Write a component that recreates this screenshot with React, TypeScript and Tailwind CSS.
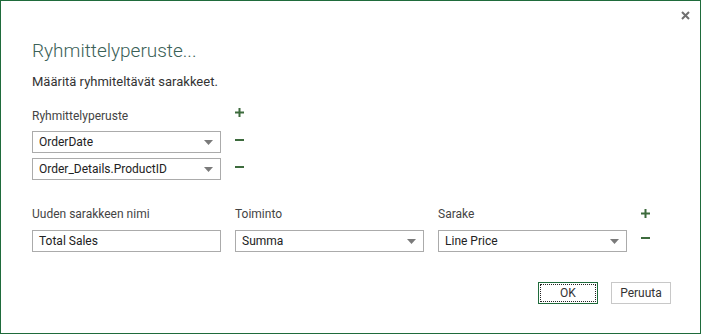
import React from "react";

const font = { fontFamily: 'Roboto, "Segoe UI", "Noto Sans", sans-serif' };

function Arrow() {
  return (
    <svg width="9" height="5" viewBox="0 0 9 5" className="shrink-0">
      <path d="M0 0 H9 L4.5 5 Z" fill="#7a7a7a" />
    </svg>
  );
}

function Plus() {
  return (
    <svg width="9" height="9" viewBox="0 0 9 9">
      <rect x="3.5" y="0" width="2" height="9" fill="#3d6b3d" />
      <rect x="0" y="3.5" width="9" height="2" fill="#3d6b3d" />
    </svg>
  );
}

function Minus() {
  return (
    <svg width="9" height="2" viewBox="0 0 9 2">
      <rect x="0" y="0" width="9" height="2" fill="#3d6b3d" />
    </svg>
  );
}

function Select({ value, w }: { value: string; w: string }) {
  return (
    <div className={`${w} h-[22px] border border-[#ababab] bg-white flex items-center justify-between pl-[6px] pr-[7px] text-[12px] text-[#222]`}>
      <span>{value}</span>
      <Arrow />
    </div>
  );
}

export default function App() {
  return (
    <div className="w-[702px] h-[335px] bg-white" style={font}>
      <div className="w-[701px] h-[334px] border border-[#1f6b3b] relative flex flex-col pl-[31px]">
        <div className="absolute right-[10px] top-[10px] w-[9px] h-[9px]">
          <svg width="9" height="9" viewBox="0 0 9 9">
            <path d="M1 1 L8 8 M8 1 L1 8" stroke="#707070" strokeWidth="2" />
          </svg>
        </div>
        <div className="mt-[37px] text-[19px] font-light text-[#3b6157] leading-[26px]">
          Ryhmittelyperuste...
        </div>
        <div className="mt-[9px] text-[13px] text-[#333] leading-[18px]">
          Määritä ryhmiteltävät sarakkeet.
        </div>
        <div className="mt-[17px] flex items-center h-[16px]">
          <div className="w-[203px] text-[12px] text-[#444]">Ryhmittelyperuste</div>
          <div className="mb-[7px] flex">
            <Plus />
          </div>
        </div>
        <div className="mt-[7px] flex flex-col gap-[5px]">
          <div className="flex items-center gap-[14px]">
            <Select value="OrderDate" w="w-[189px]" />
            <div className="mb-[4px] flex">
              <Minus />
            </div>
          </div>
          <div className="flex items-center gap-[14px]">
            <Select value="Order_Details.ProductID" w="w-[189px]" />
            <div className="mb-[4px] flex">
              <Minus />
            </div>
          </div>
        </div>
        <div className="mt-[26px] flex items-start">
          <div className="flex flex-col gap-[8px] w-[203px]">
            <div className="text-[12px] text-[#444] h-[16px] leading-[16px]">Uuden sarakkeen nimi</div>
            <div className="w-[189px] h-[22px] border border-[#ababab] flex items-center pl-[6px] text-[12px] text-[#222]">Total Sales</div>
          </div>
          <div className="flex flex-col gap-[8px] w-[203px]">
            <div className="text-[12px] text-[#444] h-[16px] leading-[16px]">Toiminto</div>
            <Select value="Summa" w="w-[189px]" />
          </div>
          <div className="flex flex-col gap-[8px] w-[203px]">
            <div className="text-[12px] text-[#444] h-[16px] leading-[16px]">Sarake</div>
            <Select value="Line Price" w="w-[189px]" />
          </div>
          <div className="flex flex-col items-start pt-[3px] gap-[19px]">
            <Plus />
            <Minus />
          </div>
        </div>
        <div className="mt-[30px] flex justify-end pr-[29px] gap-[13px]">
          <div className="w-[60px] h-[22px] border border-[#1f6b3b] p-[1px]">
            <div className="w-full h-full border border-dotted border-[#222] flex items-center justify-center text-[12px] text-[#333]">OK</div>
          </div>
          <div className="w-[60px] h-[22px] border border-[#c8c8c8] flex items-center justify-center text-[12px] text-[#333]">Peruuta</div>
        </div>
      </div>
    </div>
  );
}
